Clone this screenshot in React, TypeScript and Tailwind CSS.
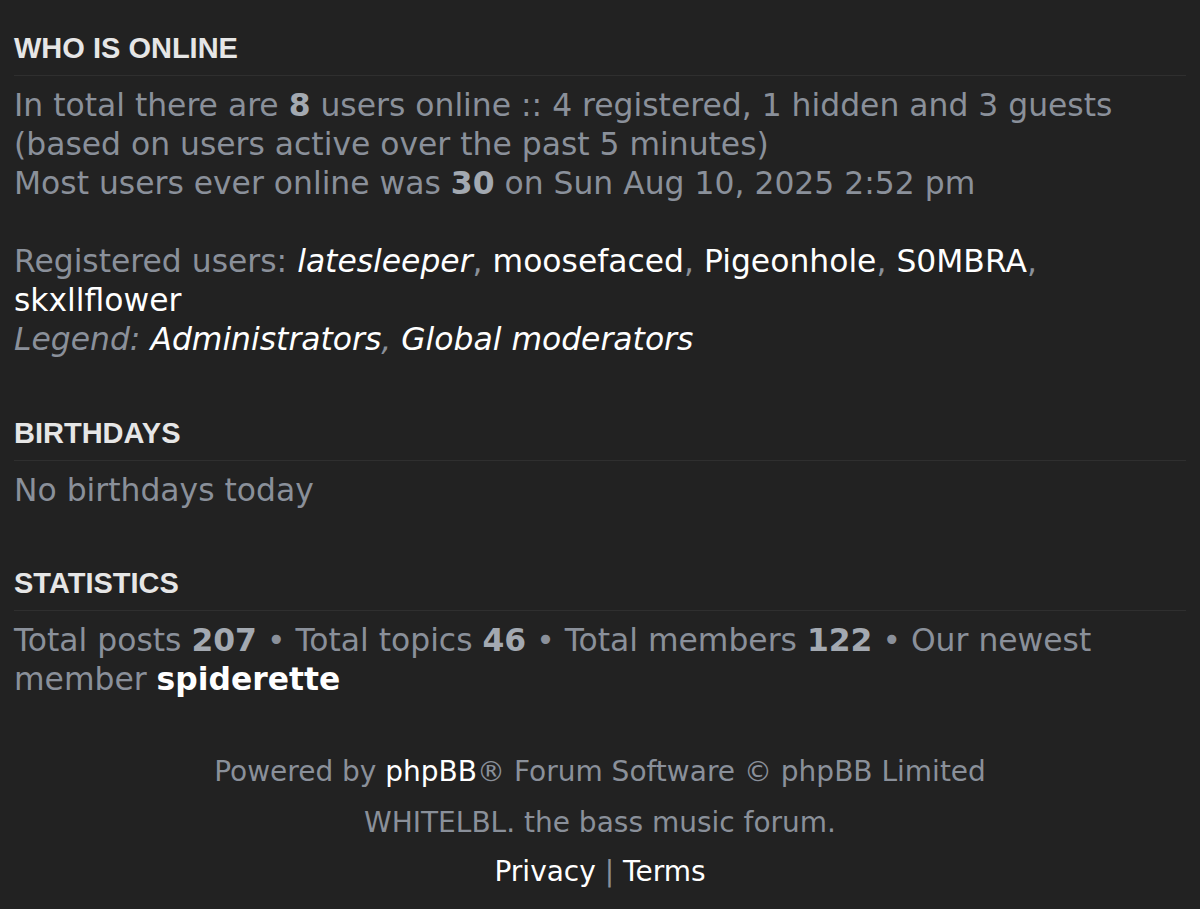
import React from 'react';

const body = "font-['DejaVu_Sans',Verdana,sans-serif]";

function Section({ title, children, className = '' }: { title: string; children: React.ReactNode; className?: string }) {
  return (
    <section className={className}>
      <h3 className="font-['Liberation_Sans',Arial,sans-serif] font-bold text-[29px] leading-[30px] text-[#e6e6e6] pb-[12px] border-b border-[#2f2f2f]">
        {title}
      </h3>
      <div className={`${body} text-[31.4px] leading-[39px] text-[#8a909a] mt-[10px]`}>{children}</div>
    </section>
  );
}

export default function App() {
  return (
    <div className="min-h-[909px] bg-[#222222] px-[14px] pt-[33px] pb-[20px]">
      <Section title="WHO IS ONLINE">
        <p>
          In total there are <strong className="text-[#a3a9b1]">8</strong> users online :: 4 registered, 1 hidden and 3 guests
          (based on users active over the past 5 minutes)
          <br />
          Most users ever online was <strong className="text-[#a3a9b1]">30</strong> on Sun Aug 10, 2025 2:52 pm
        </p>
        <p className="mt-[39px]">
          Registered users: <span className="italic text-white">latesleeper</span>,{' '}
          <span className="text-white">moosefaced</span>, <span className="text-white">Pigeonhole</span>,{' '}
          <span className="text-white">S0MBRA</span>, <span className="text-white">skxllflower</span>
          <br />
          <em>
            Legend: <span className="text-white">Administrators</span>, <span className="text-white">Global moderators</span>
          </em>
        </p>
      </Section>

      <Section title="BIRTHDAYS" className="mt-[59px]">
        <p>No birthdays today</p>
      </Section>

      <Section title="STATISTICS" className="mt-[58px]">
        <p>
          Total posts <strong className="text-[#a3a9b1]">207</strong> • Total topics{' '}
          <strong className="text-[#a3a9b1]">46</strong> • Total members <strong className="text-[#a3a9b1]">122</strong> •
          Our newest member <strong className="text-white">spiderette</strong>
        </p>
      </Section>

      <footer className={`${body} text-[28px] leading-[50px] text-[#8a909a] text-center mt-[48px]`}>
        <p>
          Powered by <span className="text-white">phpBB</span>® Forum Software © phpBB Limited
        </p>
        <p className="mt-[1px]">WHITELBL. the bass music forum.</p>
        <p className="mt-[-1px]">
          <span className="text-white">Privacy</span> | <span className="text-white">Terms</span>
        </p>
      </footer>
    </div>
  );
}
